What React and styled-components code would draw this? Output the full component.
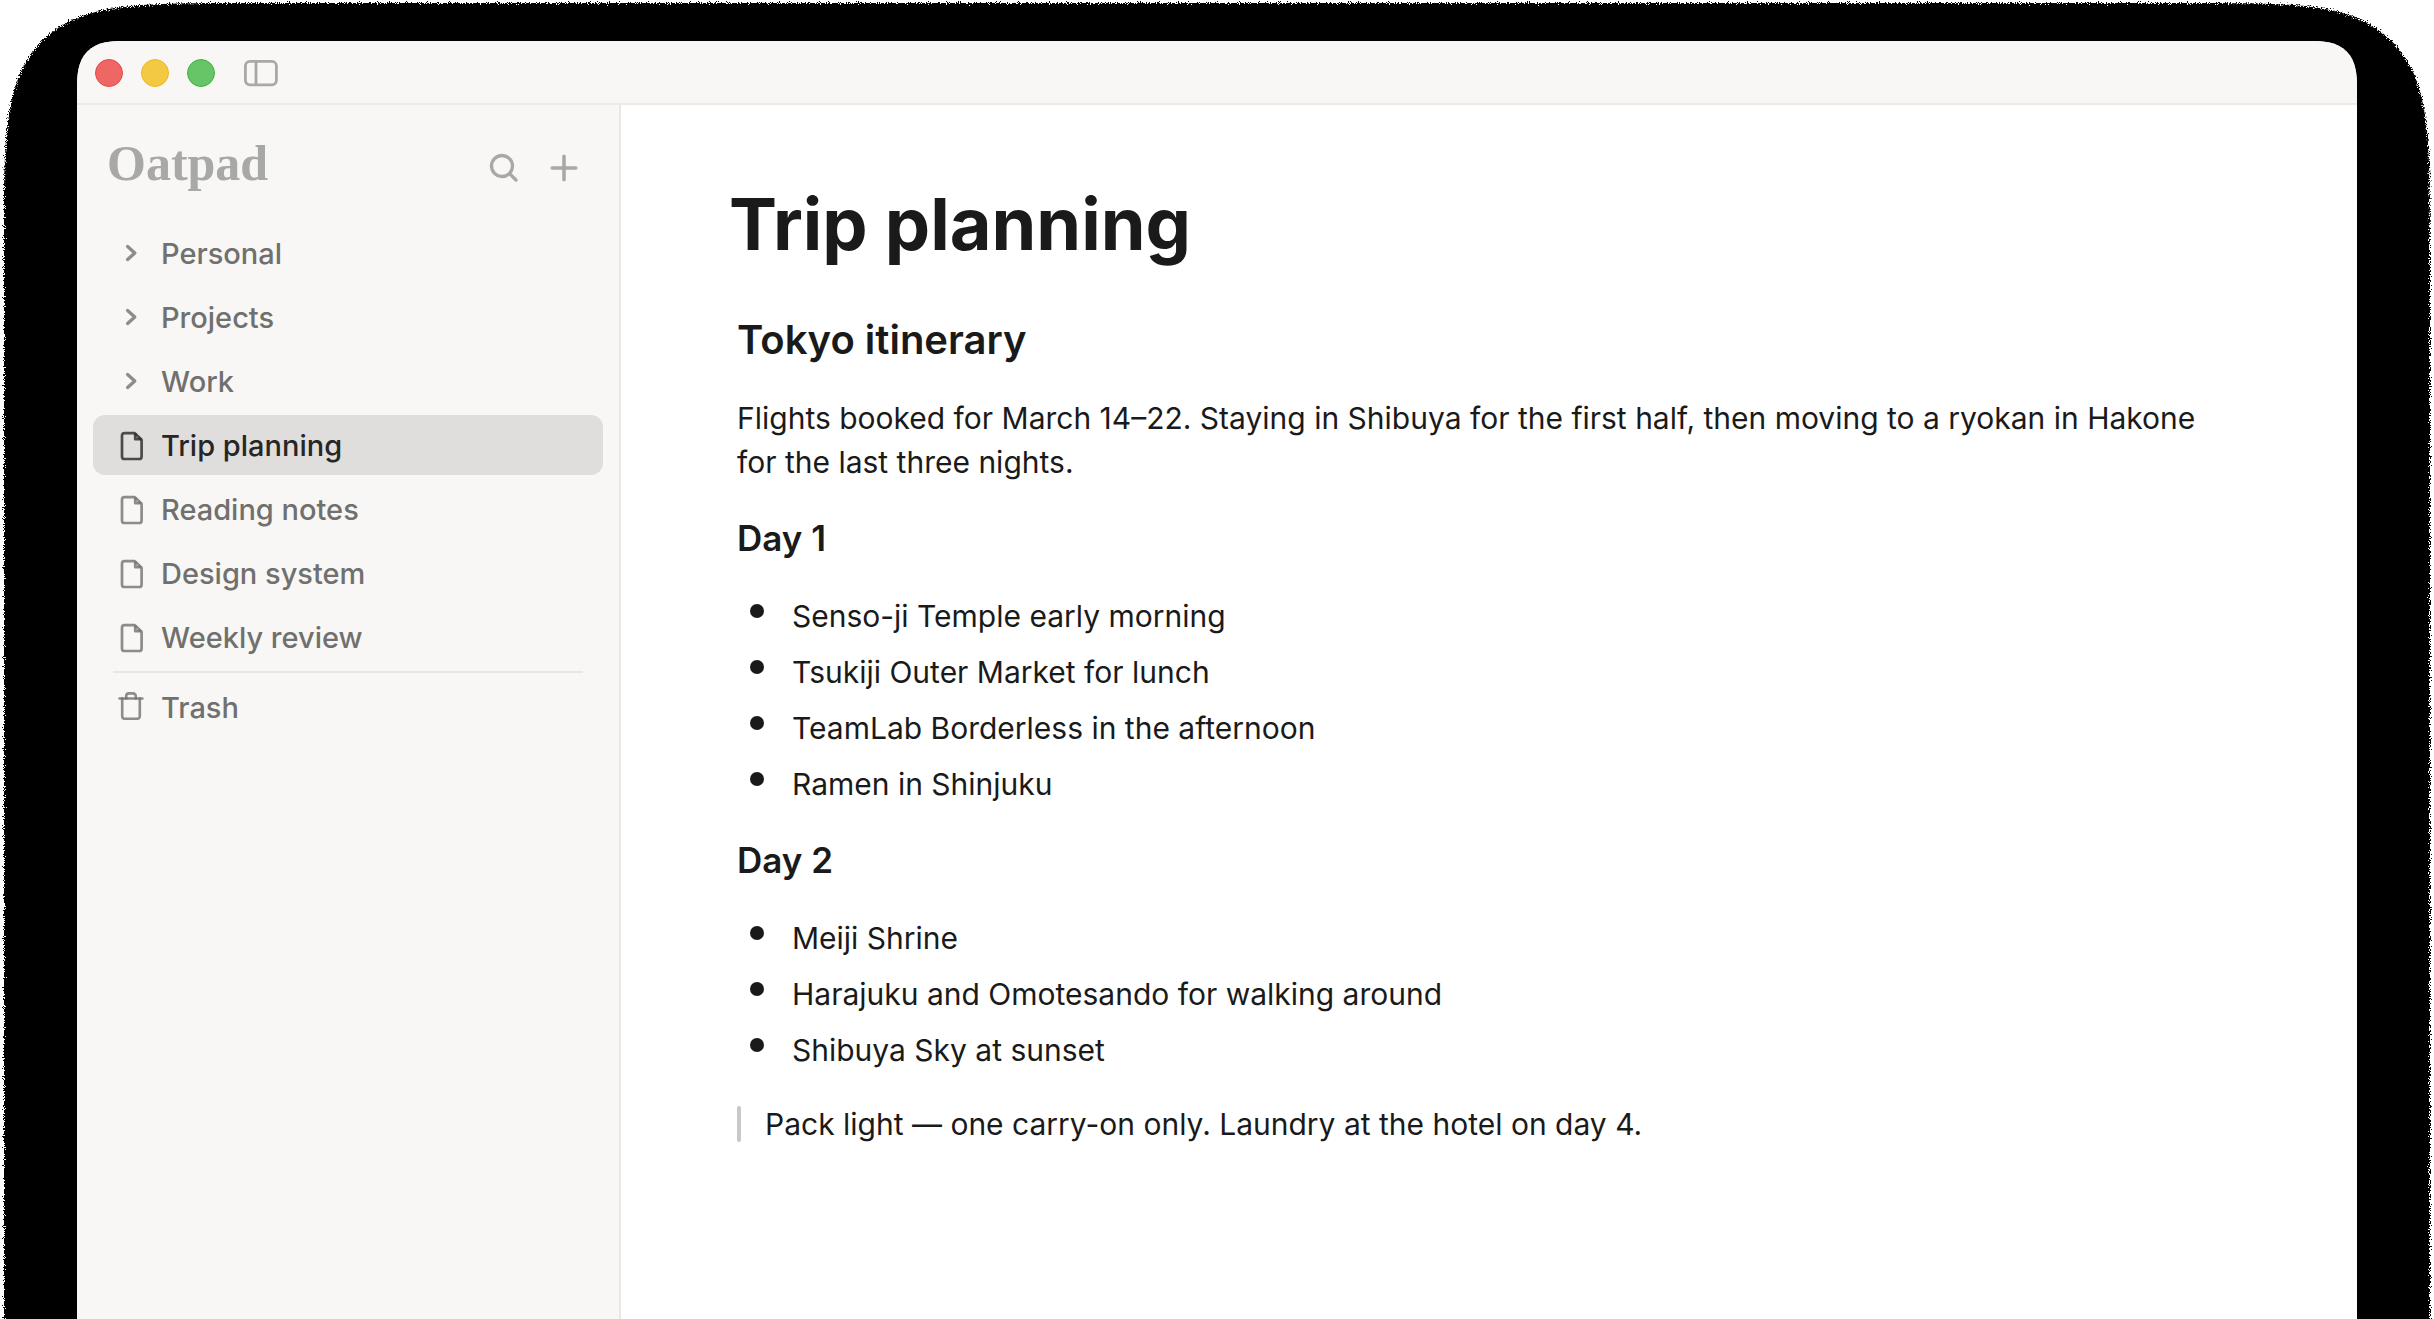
import React from "react";
import styled, { createGlobalStyle } from "styled-components";

const GlobalStyle = createGlobalStyle`
  * {
    box-sizing: border-box;
  }
  body {
    margin: 0;
    background: #ffffff;
    font-family: Inter, "Liberation Sans", sans-serif;
    color: #1a1a1a;
  }
`;

const Desktop = styled.div`
  position: relative;
  isolation: isolate;
  display: flex;
  height: 100vh;
  padding: 41px 77px 0;
  overflow: hidden;
`;

// grainy black shadow behind the window
const Shadow = styled.div`
  position: absolute;
  z-index: -1;
  top: 3px;
  left: 4px;
  right: 4px;
  bottom: -240px;
  background: #000000;
  border-radius: 130px;
  filter: url(#grain);
  @supports (corner-shape: squircle) {
    border-radius: 240px;
    corner-shape: squircle;
  }
`;

const HiddenSvg = styled.svg`
  position: absolute;
  width: 0;
  height: 0;
`;

const Window = styled.div`
  flex: 1;
  display: flex;
  flex-direction: column;
  overflow: hidden;
  background: #ffffff;
  border-radius: 36px 36px 0 0;
  @supports (corner-shape: squircle) {
    border-radius: 48px 48px 0 0;
    corner-shape: superellipse(1.5);
  }
`;

const TitleBar = styled.header`
  display: flex;
  align-items: center;
  height: 64px;
  padding: 2px 18px 0;
  background: #f8f7f5;
  border-bottom: 2px solid #ebeae8;
`;

const Lights = styled.div`
  display: flex;
  gap: 18px;
  margin-right: 28px;
`;

const Light = styled.button`
  width: 28px;
  height: 28px;
  padding: 0;
  border: 1px solid ${(props) => props.$edge};
  border-radius: 50%;
  background: ${(props) => props.$fill};
`;

const IconButton = styled.button`
  display: flex;
  padding: 0;
  border: none;
  background: none;
  color: #a8a8a6;
  cursor: pointer;
`;

const Main = styled.div`
  flex: 1;
  display: flex;
  min-height: 0;
`;

const Sidebar = styled.aside`
  flex: none;
  width: 544px;
  padding: 30px 16px 0;
  background: #f8f7f5;
  border-right: 2px solid #e8e7e3;
`;

const SidebarTop = styled.div`
  display: flex;
  justify-content: space-between;
  height: 88px;
  padding: 0 24px 0 14px;
`;

const Logo = styled.span`
  font-family: "Liberation Serif", serif;
  font-size: 50px;
  font-weight: 700;
  line-height: 56px;
  color: #a8a8a6;
`;

const Actions = styled.div`
  display: flex;
  align-items: center;
  gap: 30px;
  height: 66px;
`;

const NavList = styled.ul`
  display: flex;
  flex-direction: column;
  gap: 4px;
  margin: 0;
  padding: 0;
  list-style: none;
`;

const NavItem = styled.button`
  display: flex;
  align-items: center;
  gap: 14px;
  width: 100%;
  height: 60px;
  padding: 0 22px;
  border: none;
  border-radius: 12px;
  background: ${(props) => (props.$active ? "#dfdedc" : "transparent")};
  color: ${(props) => (props.$active ? "#262626" : "#70706e")};
  font-family: inherit;
  font-size: 29px;
  font-weight: 500;
  text-align: left;
  cursor: pointer;
  svg {
    flex: none;
    stroke-opacity: 0.8;
  }
`;

const Divider = styled.hr`
  height: 2px;
  margin: 4px 20px;
  border: none;
  background: #e8e7e3;
`;

const Editor = styled.main`
  flex: 1;
  padding: 71px 120px 0 116px;
`;

const Title = styled.h1`
  margin: 0 0 40px -8px;
  font-size: 72px;
  font-weight: 700;
  line-height: 96px;
`;

const Heading = styled.h2`
  margin: 0 0 28px;
  font-size: 40px;
  font-weight: 600;
  line-height: 56px;
`;

const SubHeading = styled.h3`
  margin: 24px 0 26px;
  font-size: 35px;
  font-weight: 600;
  line-height: 48px;
`;

const Paragraph = styled.p`
  margin: 0 0 30px;
  font-size: 30px;
  line-height: 44px;
`;

const List = styled.ul`
  margin: 0;
  padding: 0;
  list-style: none;
`;

const ListItem = styled.li`
  display: flex;
  gap: 28px;
  padding: 6px 0 6px 13px;
  font-size: 30px;
  line-height: 44px;
  &::before {
    content: "";
    flex: none;
    width: 14px;
    height: 14px;
    margin-top: 10px;
    border-radius: 50%;
    background: #1a1a1a;
  }
`;

const Quote = styled.blockquote`
  display: flex;
  align-items: center;
  gap: 24px;
  margin: 24px 0 0;
  font-size: 30px;
  line-height: 44px;
  &::before {
    content: "";
    width: 4px;
    height: 36px;
    border-radius: 2px;
    background: #c8c8c8;
  }
`;

const PanelIcon = () => (
  <svg width="36" height="28" viewBox="0 0 36 28" fill="none" stroke="currentColor" strokeWidth="2.8">
    <rect x="2.4" y="2.4" width="31" height="23.4" rx="4.5" />
    <path d="M13 2.4v23.4" />
  </svg>
);

const SearchIcon = () => (
  <svg width="30" height="30" viewBox="0 0 30 30" fill="none" stroke="currentColor" strokeWidth="3.3" strokeLinecap="round">
    <circle cx="13" cy="13" r="10.5" />
    <path d="M20.6 20.6l6.4 6.4" />
  </svg>
);

const PlusIcon = () => (
  <svg width="30" height="30" viewBox="0 0 30 30" fill="none" stroke="currentColor" strokeWidth="3.6" strokeLinecap="round">
    <path d="M15 3.2v23.6M3.2 15h23.6" />
  </svg>
);

const ChevronIcon = () => (
  <svg width="32" height="32" viewBox="0 0 32 32" fill="none" stroke="currentColor" strokeWidth="3.3" strokeLinecap="round" strokeLinejoin="round">
    <path d="M12.600 9.500l7.200 6.500-7.200 6.500" />
  </svg>
);

const FileIcon = () => (
  <svg width="32" height="32" viewBox="0 0 32 32" fill="none" stroke="currentColor" strokeWidth="2.7" strokeLinejoin="round">
    <path d="M9.6 4.100h10.200l6.800 6.600v16.700a2.600 2.600 0 0 1-2.600 2.600H9.600A2.600 2.600 0 0 1 7 27.400V6.700a2.600 2.600 0 0 1 2.600-2.600z" />
    <path d="M20.200 4.600v5.600h5.800" />
  </svg>
);

const TrashIcon = () => (
  <svg width="32" height="32" viewBox="0 0 32 32" fill="none" stroke="currentColor" strokeWidth="2.6" strokeLinecap="round" strokeLinejoin="round">
    <path d="M4.600 7.500h22.800" />
    <path d="M11.200 7.500V5.200a2.800 2.800 0 0 1 2.800-2.800h4a2.800 2.800 0 0 1 2.800 2.800v2.300" />
    <path d="M7.200 7.500v17.800a2.400 2.400 0 0 0 2.400 2.400h12.800a2.400 2.400 0 0 0 2.400-2.400V7.500" />
  </svg>
);

const navItems = [
  { label: "Personal", Icon: ChevronIcon },
  { label: "Projects", Icon: ChevronIcon },
  { label: "Work", Icon: ChevronIcon },
  { label: "Trip planning", Icon: FileIcon, active: true },
  { label: "Reading notes", Icon: FileIcon },
  { label: "Design system", Icon: FileIcon },
  { label: "Weekly review", Icon: FileIcon },
];

const days = [
  {
    name: "Day 1",
    stops: [
      "Senso-ji Temple early morning",
      "Tsukiji Outer Market for lunch",
      "TeamLab Borderless in the afternoon",
      "Ramen in Shinjuku",
    ],
  },
  {
    name: "Day 2",
    stops: ["Meiji Shrine", "Harajuku and Omotesando for walking around", "Shibuya Sky at sunset"],
  },
];

const App = () => {
  return (
    <Desktop>
      <GlobalStyle />
      <HiddenSvg aria-hidden="true">
        <filter id="grain" x="-1%" y="-1%" width="102%" height="102%">
          <feTurbulence type="fractalNoise" baseFrequency="0.9" numOctaves="1" seed="4" />
          <feDisplacementMap in="SourceGraphic" scale="9" xChannelSelector="R" yChannelSelector="G" />
        </filter>
      </HiddenSvg>
      <Shadow />
      <Window>
        <TitleBar>
          <Lights>
            <Light aria-label="Close" $fill="#ee6765" $edge="#e5484a" />
            <Light aria-label="Minimize" $fill="#f3c944" $edge="#edb91f" />
            <Light aria-label="Zoom" $fill="#67c567" $edge="#41b24a" />
          </Lights>
          <IconButton aria-label="Toggle sidebar">
            <PanelIcon />
          </IconButton>
        </TitleBar>
        <Main>
          <Sidebar>
            <SidebarTop>
              <Logo>Oatpad</Logo>
              <Actions>
                <IconButton aria-label="Search">
                  <SearchIcon />
                </IconButton>
                <IconButton aria-label="New page">
                  <PlusIcon />
                </IconButton>
              </Actions>
            </SidebarTop>
            <nav>
              <NavList>
                {navItems.map(({ label, Icon, active }) => (
                  <li key={label}>
                    <NavItem $active={active}>
                      <Icon />
                      {label}
                    </NavItem>
                  </li>
                ))}
              </NavList>
              <Divider />
              <NavItem>
                <TrashIcon />
                Trash
              </NavItem>
            </nav>
          </Sidebar>
          <Editor>
            <Title>Trip planning</Title>
            <Heading>Tokyo itinerary</Heading>
            <Paragraph>
              Flights booked for March 14–22. Staying in Shibuya for the first half, then moving to a ryokan in
              Hakone for the last three nights.
            </Paragraph>
            {days.map((day) => (
              <section key={day.name}>
                <SubHeading>{day.name}</SubHeading>
                <List>
                  {day.stops.map((stop) => (
                    <ListItem key={stop}>{stop}</ListItem>
                  ))}
                </List>
              </section>
            ))}
            <Quote>Pack light — one carry-on only. Laundry at the hotel on day 4.</Quote>
          </Editor>
        </Main>
      </Window>
    </Desktop>
  );
};

export default App;
